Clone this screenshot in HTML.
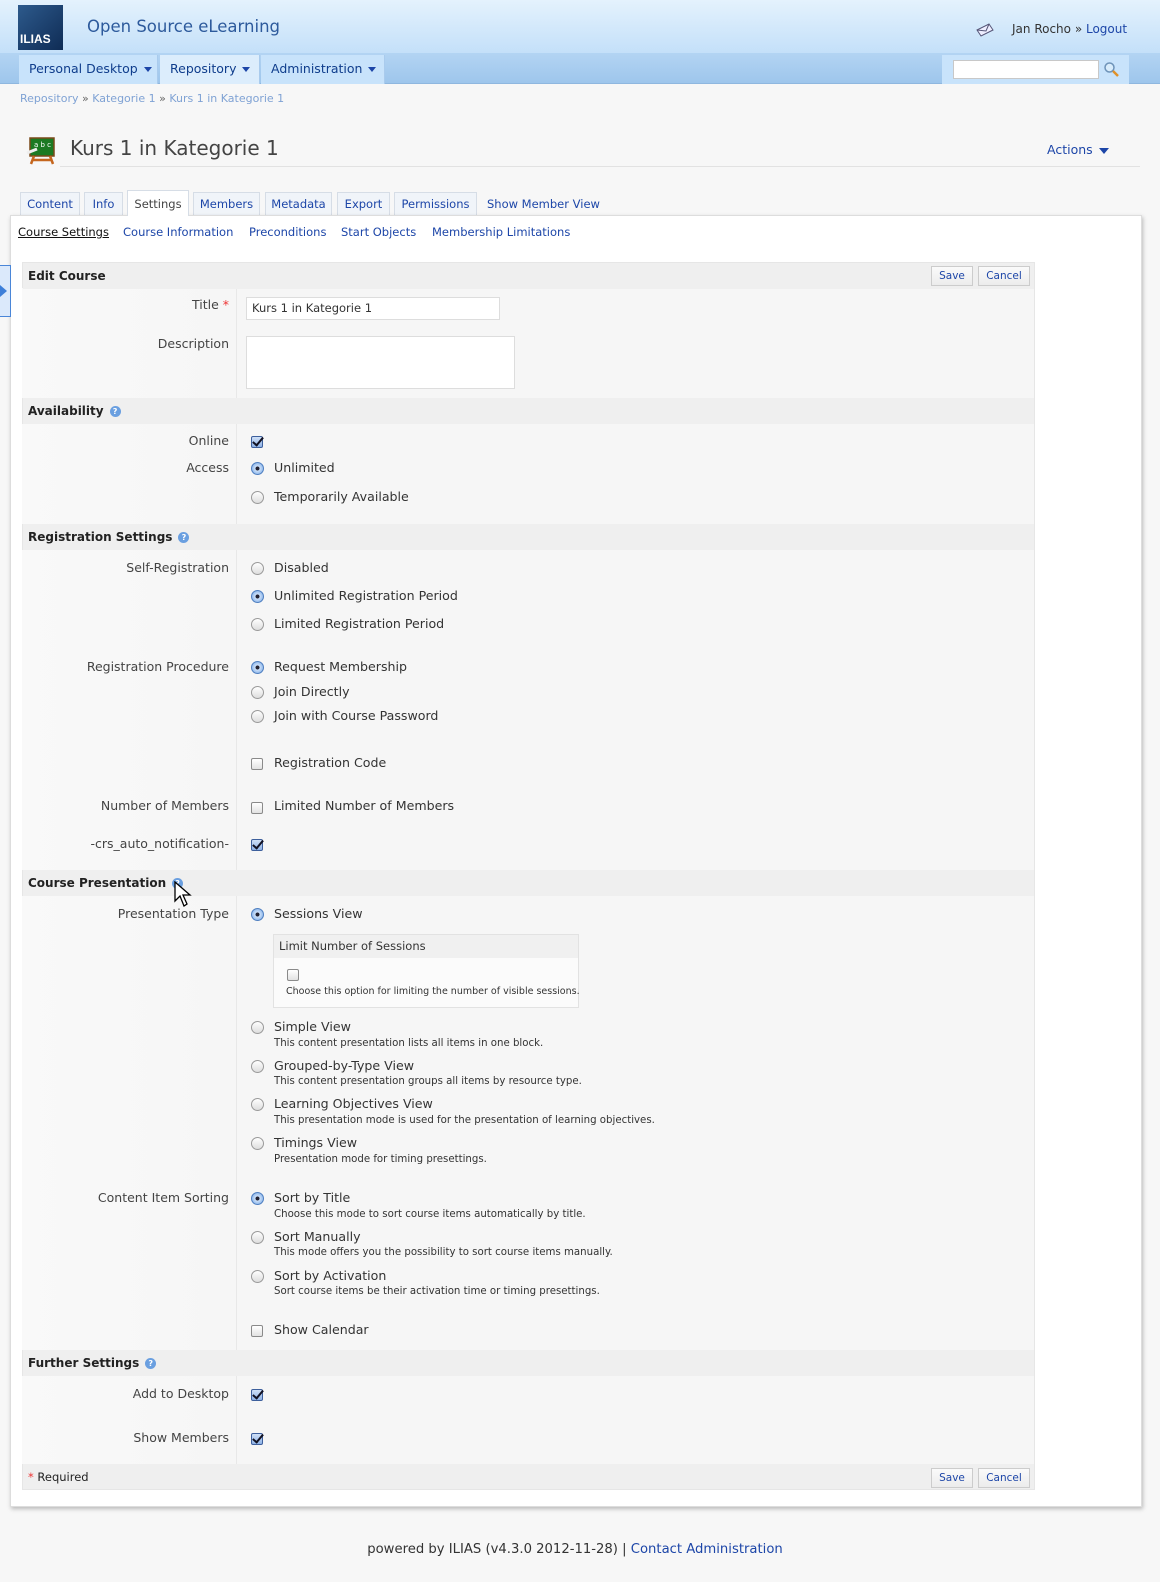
<!DOCTYPE html>
<html><head><meta charset="utf-8">
<style>
*{margin:0;padding:0;box-sizing:border-box}
body{width:1160px;height:1582px;background:#f7f7f7;font-family:"DejaVu Sans","Liberation Sans",sans-serif;font-size:11.5px;color:#333;position:relative;overflow:hidden}
.a{position:absolute;white-space:nowrap;line-height:16px}
a,.lk{color:#1d46a8;text-decoration:none}
.hdr{position:absolute;left:0;top:0;width:1160px;height:53px;background:linear-gradient(#e4f2fd,#c4e0f9)}
.nav{position:absolute;left:0;top:53px;width:1160px;height:31px;background:linear-gradient(#b3d4f3,#9ec6ec);border-bottom:1px solid #8fb7df}
.nb{position:absolute;top:55px;height:29px;background:#c8e3fb;border-right:1px solid #a9cbed;color:#0f3d8c;font-size:12.5px;line-height:28px;padding-left:10px}
.tri{display:inline-block;width:0;height:0;border-left:4px solid transparent;border-right:4px solid transparent;border-top:5px solid #1d46a8;vertical-align:middle;margin-left:6px}
.tab{position:absolute;top:192px;height:23px;border:1px solid #d6dde6;border-bottom:none;background:#f0f4f9;color:#1d46a8;font-size:11.5px;line-height:22px;text-align:center}
.panel{position:absolute;left:10px;top:215px;width:1132px;height:1292px;background:#fff;border:1px solid #ddd;box-shadow:1px 2px 4px rgba(0,0,0,.25)}
.form{position:absolute;left:22px;top:262px;width:1013px;height:1228px;background:#f6f6f6;border:1px solid #e6e6e6}
.lcol{position:absolute;left:22px;width:215px;background:linear-gradient(90deg,#f9f9f9,#f6f6f6);border-right:1px solid #e8e8e8}
.sec{position:absolute;left:23px;width:1011px;height:26px;background:#efefef;font-weight:bold;font-size:12px;line-height:26px;padding-left:5px;color:#222}
.q{display:inline-block;width:11px;height:11px;border-radius:50%;background:#6a9fe0;color:#fff;font-size:8px;line-height:11px;text-align:center;vertical-align:middle;margin-left:6px;font-weight:bold}
.lbl{position:absolute;right:931px;white-space:nowrap;line-height:16px;color:#444;font-size:12.5px}
.r{position:absolute;width:13px;height:13px;border-radius:50%;border:1px solid #9a9a9a;background:linear-gradient(#fff,#ddd)}
.r.on{border-color:#4f7fc0;background:radial-gradient(circle,#223 0 1.8px,#cfe2fa 2.2px,#8db6ea 6px)}
.c{position:absolute;width:12px;height:12px;border-radius:2px;border:1px solid #8a8a8a;background:linear-gradient(#fff,#e2e2e2)}
.c.on{border-color:#3d5f9c;background:linear-gradient(#cfe0f7,#8eb2e6)}
.c.on::after{content:"";position:absolute;left:3px;top:-2px;width:4px;height:9px;border-right:2px solid #112;border-bottom:2px solid #112;transform:rotate(40deg)}
.opt{position:absolute;left:274px;white-space:nowrap;line-height:16px;color:#333;font-size:12.6px}
.d{position:absolute;left:274px;white-space:nowrap;font-size:10.2px;color:#333;line-height:12px}
.btn{position:absolute;height:20px;border:1px solid #ccc;background:linear-gradient(#fafafa,#ececec);color:#1d46a8;font-size:10.5px;line-height:18px;text-align:center}
</style></head><body>
<div class="hdr"></div>
<div style="position:absolute;left:18px;top:5px;width:45px;height:45px;background:linear-gradient(135deg,#2d5a8c,#0f2c55);color:#fff;font-weight:bold;font-size:12px;font-family:'Liberation Sans',sans-serif;padding:27px 0 0 2px">ILIAS</div>
<div class="a" style="left:87px;top:17px;font-size:16.5px;color:#2d5a9c;line-height:20px">Open Source eLearning</div>
<svg style="position:absolute;left:975px;top:22px" width="20" height="15" viewBox="0 0 20 15"><path d="M2 8 L14 2 L18 8 L6 14 Z" fill="#eef" stroke="#557" stroke-width="1"/><path d="M2 8 L11 9 L14 2" fill="none" stroke="#557"/></svg>
<div class="a" style="left:1012px;top:21px;font-size:12px">Jan Rocho » <span class="lk">Logout</span></div>
<div class="nav"></div>
<div class="nb" style="left:19px;width:139px">Personal Desktop<span class="tri"></span></div>
<div class="nb" style="left:160px;width:100px;background:#dcedfc">Repository<span class="tri"></span></div>
<div class="nb" style="left:261px;width:124px">Administration<span class="tri"></span></div>
<div style="position:absolute;left:942px;top:55px;width:187px;height:29px;background:#c8e3fb"></div>
<div style="position:absolute;left:953px;top:60px;width:146px;height:19px;background:#fff;border:1px solid #c8c8c8"></div>
<svg style="position:absolute;left:1103px;top:61px" width="17" height="17" viewBox="0 0 17 17"><circle cx="6.5" cy="6.5" r="4.5" fill="#d8ecfb" stroke="#6e93b8" stroke-width="1.5"/><path d="M10 10 L15 15" stroke="#e0922a" stroke-width="2.5"/></svg>
<div class="a" style="left:20px;top:91px;font-size:11px;color:#7fa2d4">Repository <span style="color:#666">»</span> Kategorie 1 <span style="color:#666">»</span> Kurs 1 in Kategorie 1</div>
<svg style="position:absolute;left:25px;top:136px" width="32" height="30" viewBox="0 0 32 30"><rect x="5" y="2" width="24" height="18" fill="#1c7a22" stroke="#7a4a1a" stroke-width="1.5"/><text x="9" y="11" font-size="7" fill="#fff" font-family="DejaVu Sans">a b c</text><path d="M2 17 L12 13" stroke="#eee" stroke-width="3"/><path d="M9 20 L6 28 M25 20 L28 28 M8 24 L26 24" stroke="#c5661e" stroke-width="2.5"/></svg>
<div class="a" style="left:70px;top:136px;font-size:20px;color:#444;line-height:24px">Kurs 1 in Kategorie 1</div>
<div style="position:absolute;left:60px;top:166px;width:1080px;height:1px;background:#e2e2e2"></div>
<div class="a" style="left:1047px;top:142px;font-size:12.5px;color:#1d46a8">Actions<span class="tri" style="border-left-width:5px;border-right-width:5px;border-top-width:6px"></span></div>

<div class="tab" style="left:20px;width:60px">Content</div>
<div class="tab" style="left:84px;width:39px">Info</div>
<div class="tab" style="left:127px;width:62px;top:190px;height:26px;background:#fff;color:#444;line-height:26px;z-index:2">Settings</div>
<div class="tab" style="left:193px;width:67px">Members</div>
<div class="tab" style="left:265px;width:67px">Metadata</div>
<div class="tab" style="left:337px;width:53px">Export</div>
<div class="tab" style="left:394px;width:83px">Permissions</div>
<div class="a lk" style="left:487px;top:196px">Show Member View</div>

<div class="panel"></div>
<div class="a" style="left:18px;top:224px;text-decoration:underline;color:#111">Course Settings</div>
<div class="a lk" style="left:123px;top:224px">Course Information</div>
<div class="a lk" style="left:249px;top:224px">Preconditions</div>
<div class="a lk" style="left:341px;top:224px">Start Objects</div>
<div class="a lk" style="left:432px;top:224px">Membership Limitations</div>

<div style="position:absolute;left:0;top:265px;width:11px;height:52px;background:#dbe9fb;border:1px solid #4a86d8;border-left:none"></div>
<div style="position:absolute;left:0;top:285px;border-top:6px solid transparent;border-bottom:6px solid transparent;border-left:7px solid #3d7fd9"></div>

<div class="form"></div>
<div class="lcol" style="top:288px;height:110px"></div>
<div class="lcol" style="top:424px;height:100px"></div>
<div class="lcol" style="top:550px;height:320px"></div>
<div class="lcol" style="top:896px;height:454px"></div>
<div class="lcol" style="top:1376px;height:88px"></div>

<div class="sec" style="top:263px">Edit Course</div>
<div class="btn" style="left:931px;top:266px;width:42px">Save</div>
<div class="btn" style="left:978px;top:266px;width:52px">Cancel</div>
<div class="lbl" style="top:297px">Title <span style="color:#e33">*</span></div>
<div style="position:absolute;left:246px;top:297px;width:254px;height:23px;background:#fff;border:1px solid #ddd;font-size:11.5px;line-height:21px;padding-left:5px">Kurs 1 in Kategorie 1</div>
<div class="lbl" style="top:336px">Description</div>
<div style="position:absolute;left:246px;top:336px;width:269px;height:53px;background:#fff;border:1px solid #ddd"></div>

<div class="sec" style="top:398px">Availability<span class="q">?</span></div>
<div class="lbl" style="top:433px">Online</div><div class="c on" style="left:251px;top:436px"></div>
<div class="lbl" style="top:460px">Access</div><div class="r on" style="left:251px;top:462px"></div><div class="opt" style="top:460px">Unlimited</div>
<div class="r" style="left:251px;top:491px"></div><div class="opt" style="top:489px">Temporarily Available</div>

<div class="sec" style="top:524px">Registration Settings<span class="q">?</span></div>
<div class="lbl" style="top:560px">Self-Registration</div>
<div class="r" style="left:251px;top:562px"></div><div class="opt" style="top:560px">Disabled</div>
<div class="r on" style="left:251px;top:590px"></div><div class="opt" style="top:588px">Unlimited Registration Period</div>
<div class="r" style="left:251px;top:618px"></div><div class="opt" style="top:616px">Limited Registration Period</div>
<div class="lbl" style="top:659px">Registration Procedure</div>
<div class="r on" style="left:251px;top:661px"></div><div class="opt" style="top:659px">Request Membership</div>
<div class="r" style="left:251px;top:686px"></div><div class="opt" style="top:684px">Join Directly</div>
<div class="r" style="left:251px;top:710px"></div><div class="opt" style="top:708px">Join with Course Password</div>
<div class="c" style="left:251px;top:758px"></div><div class="opt" style="top:755px">Registration Code</div>
<div class="lbl" style="top:798px">Number of Members</div>
<div class="c" style="left:251px;top:802px"></div><div class="opt" style="top:798px">Limited Number of Members</div>
<div class="lbl" style="top:836px">-crs_auto_notification-</div>
<div class="c on" style="left:251px;top:839px"></div>

<div class="sec" style="top:870px">Course Presentation<span class="q">?</span></div>
<svg style="position:absolute;left:174px;top:881px" width="20" height="28" viewBox="0 0 20 28"><path d="M1 1 L1 20 L6 15 L10 25 L13 23 L9 14 L16 14 Z" fill="#fff" stroke="#000" stroke-width="1.3"/></svg>
<div class="lbl" style="top:906px">Presentation Type</div>
<div class="r on" style="left:251px;top:908px"></div><div class="opt" style="top:906px">Sessions View</div>
<div style="position:absolute;left:273px;top:934px;width:306px;height:74px;background:#fbfbfb;border:1px solid #e2e2e2"></div>
<div style="position:absolute;left:274px;top:935px;width:304px;height:23px;background:#f0f0f0;font-size:11.5px;line-height:23px;padding-left:5px">Limit Number of Sessions</div>
<div class="c" style="left:287px;top:969px"></div>
<div class="a" style="left:286px;top:986px;font-size:9.5px;line-height:12px">Choose this option for limiting the number of visible sessions.</div>
<div class="r" style="left:251px;top:1021px"></div><div class="opt" style="top:1019px">Simple View</div><div class="d" style="top:1038px">This content presentation lists all items in one block.</div>
<div class="r" style="left:251px;top:1060px"></div><div class="opt" style="top:1058px">Grouped-by-Type View</div><div class="d" style="top:1076px">This content presentation groups all items by resource type.</div>
<div class="r" style="left:251px;top:1098px"></div><div class="opt" style="top:1096px">Learning Objectives View</div><div class="d" style="top:1115px">This presentation mode is used for the presentation of learning objectives.</div>
<div class="r" style="left:251px;top:1137px"></div><div class="opt" style="top:1135px">Timings View</div><div class="d" style="top:1154px">Presentation mode for timing presettings.</div>
<div class="lbl" style="top:1190px">Content Item Sorting</div>
<div class="r on" style="left:251px;top:1192px"></div><div class="opt" style="top:1190px">Sort by Title</div><div class="d" style="top:1209px">Choose this mode to sort course items automatically by title.</div>
<div class="r" style="left:251px;top:1231px"></div><div class="opt" style="top:1229px">Sort Manually</div><div class="d" style="top:1247px">This mode offers you the possibility to sort course items manually.</div>
<div class="r" style="left:251px;top:1270px"></div><div class="opt" style="top:1268px">Sort by Activation</div><div class="d" style="top:1286px">Sort course items be their activation time or timing presettings.</div>
<div class="c" style="left:251px;top:1325px"></div><div class="opt" style="top:1322px">Show Calendar</div>

<div class="sec" style="top:1350px">Further Settings<span class="q">?</span></div>
<div class="lbl" style="top:1386px">Add to Desktop</div><div class="c on" style="left:251px;top:1389px"></div>
<div class="lbl" style="top:1430px">Show Members</div><div class="c on" style="left:251px;top:1433px"></div>

<div class="sec" style="top:1464px;font-weight:normal;height:25px;font-size:11.5px"><span style="color:#e33">*</span> Required</div>
<div class="btn" style="left:931px;top:1468px;width:42px">Save</div>
<div class="btn" style="left:978px;top:1468px;width:52px">Cancel</div>

<div class="a" style="left:0;width:1150px;text-align:center;top:1542px;font-size:13.2px">powered by ILIAS (v4.3.0 2012-11-28) | <span class="lk">Contact Administration</span></div>
</body></html>
